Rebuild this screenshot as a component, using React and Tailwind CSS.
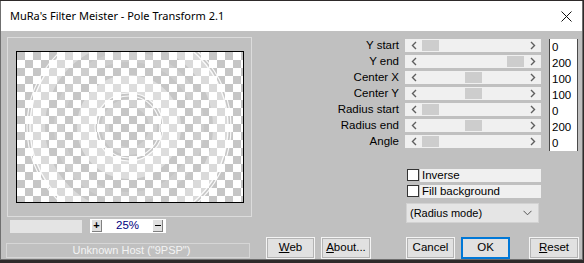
import React from "react";

const sliders = [
  { label: "Y start", value: "0", pos: 0 },
  { label: "Y end", value: "200", pos: 1 },
  { label: "Center X", value: "100", pos: 0.5 },
  { label: "Center Y", value: "100", pos: 0.5 },
  { label: "Radius start", value: "0", pos: 0 },
  { label: "Radius end", value: "200", pos: 0.5 },
  { label: "Angle", value: "0", pos: 0 },
];

function Chevron({ dir }) {
  return (
    <svg width="6" height="9" viewBox="0 0 6 9">
      <polyline
        points={dir === "left" ? "5,1 1.5,4.5 5,8" : "1,1 4.5,4.5 1,8"}
        fill="none"
        stroke="#5f5f5f"
        strokeWidth="1.4"
      />
    </svg>
  );
}

function Slider({ pos }) {
  return (
    <div className="ml-[6px] w-[136px] h-[13px] bg-[#f0f0f0] flex items-center">
      <div className="w-[17px] h-full flex items-center justify-center">
        <Chevron dir="left" />
      </div>
      <div className="flex-1 h-full relative">
        {/* thumb travels 0..85px */}
        <div
          className="absolute top-[1px] bottom-[1px] w-[17px] bg-[#cdcdcd]"
          style={{ left: pos * 85 }}
        />
      </div>
      <div className="w-[17px] h-full flex items-center justify-center">
        <Chevron dir="right" />
      </div>
    </div>
  );
}

function Preview() {
  return (
    <svg width="226" height="150" viewBox="0 0 226 150" className="block">
      <defs>
        <pattern id="chk" width="16" height="16" patternUnits="userSpaceOnUse">
          <rect width="16" height="16" fill="#ffffff" />
          <rect width="8" height="8" fill="#c6c6c6" />
          <rect x="8" y="8" width="8" height="8" fill="#c6c6c6" />
        </pattern>
      </defs>
      <rect width="226" height="150" fill="url(#chk)" />
      <g fill="none" stroke="#ffffff">
        <circle cx="112" cy="75" r="24" strokeWidth="8" opacity="0.2" />
        <circle cx="112" cy="75" r="43" strokeWidth="18" opacity="0.4" />
        <circle cx="112" cy="75" r="70" strokeWidth="10" opacity="0.15" />
        <circle cx="112" cy="75" r="92" strokeWidth="16" opacity="0.35" />
        <circle cx="112" cy="75" r="31" strokeWidth="1.2" opacity="0.9" />
        <circle cx="112" cy="75" r="34" strokeWidth="1.2" opacity="0.9" />
        <circle cx="112" cy="75" r="99" strokeWidth="1.2" opacity="0.9" />
        <circle cx="112" cy="75" r="102" strokeWidth="1.2" opacity="0.9" />
      </g>
    </svg>
  );
}

function Btn({ children, className = "", ok = false }) {
  return (
    <button
      className={`h-[22px] bg-[#e1e1e1] text-[11.5px] text-black flex items-center justify-center ${
        ok
          ? "border-2 border-[#0078d7]"
          : "border border-[#f4f4f4] shadow-[inset_0_0_0_1px_#b4b4b4]"
      } ${className}`}
    >
      {children}
    </button>
  );
}

export default function App() {
  return (
    <div className="w-[584px] h-[263px] bg-[#2e2a2a] pt-px font-['Liberation_Sans',Arial,sans-serif] overflow-hidden">
      <div className="w-[583px] h-[259px] flex flex-col border-x border-b border-[#6f6f6f]">
        {/* title bar */}
        <div className="h-[30px] bg-white flex items-center pl-[9px] pr-[10px]">
          <span className="text-[11px] text-black font-['Noto_Sans',sans-serif]">
            MuRa's Filter Meister - Pole Transform 2.1
          </span>
          <svg width="11" height="11" viewBox="0 0 11 11" className="ml-auto">
            <path d="M0.5 0.5 L10.5 10.5 M10.5 0.5 L0.5 10.5" stroke="#111" strokeWidth="1" />
          </svg>
        </div>

        {/* body */}
        <div className="flex-1 bg-[#c0c0c0] flex pl-[6px] text-[11px] text-black">
          {/* left column */}
          <div className="w-[245px] flex flex-col pt-[6px]">
            <div className="h-[180px] border border-[#dcdcdc] pt-[13px] pl-[8px]">
              <div className="w-[228px] h-[152px] border border-black">
                <Preview />
              </div>
            </div>
            <div className="mt-[2px] pl-[3px] flex items-center h-[14px]">
              <div className="w-[72px] h-[13px] bg-[#e4e4e4]" />
              <div className="ml-[8px] w-[76px] h-[14px] bg-white flex items-center pl-[2px] pr-[3px]">
                <div className="w-[10px] h-[12px] bg-[#e0e0e0] border-r border-b border-[#808080] flex items-center justify-center text-[11px] leading-none font-bold">
                  +
                </div>
                <span className="flex-1 text-center text-[#000080] leading-none text-[11.5px]">25%</span>
                <div className="w-[10px] h-[12px] bg-[#e0e0e0] border-r border-b border-[#808080] flex items-center justify-center">
                  <div className="w-[6px] h-px bg-black" />
                </div>
              </div>
            </div>
            <div className="mt-[10px] -ml-[1px] w-[244px] h-[15px] border border-[#d6d6d6] flex items-center justify-center pl-[7px] text-[#f4f4f4] leading-none">
              Unknown Host ("9PSP")
            </div>
          </div>

          {/* right region */}
          <div className="ml-[14px] w-[313px] flex flex-col pt-[8px]">
            {sliders.map((s) => (
              <div key={s.label} className="h-[16px] flex items-start">
                <div className="w-[133px] h-[13px] text-right leading-[13px] text-[11.5px]">
                  {s.label}
                </div>
                <Slider pos={s.pos} />
                <div className="ml-[8px] w-[29px] h-[16px] bg-white border-x border-[#4a4a4a] pl-[2px] leading-[16px] text-[11.5px]">
                  {s.value}
                </div>
              </div>
            ))}

            <div className="mt-[18px] ml-[141px] h-[13px] flex">
              <div className="w-[12px] h-[12px] bg-white border border-[#333]" />
              <div className="ml-px w-[121px] h-[13px] bg-[#f0f0f0] pl-[2px] leading-[13px] text-[11.5px]">Inverse</div>
            </div>
            <div className="mt-[3px] ml-[141px] h-[13px] flex">
              <div className="w-[12px] h-[12px] bg-white border border-[#333]" />
              <div className="ml-px w-[121px] h-[13px] bg-[#f0f0f0] pl-[2px] leading-[13px] text-[11.5px]">
                Fill background
              </div>
            </div>

            <div className="mt-[5px] ml-[140px] w-[133px] h-[20px] bg-[#e5e5e5] border border-[#d2d2d2] flex items-center pl-[3px] pr-[6px]">
              <span>(Radius mode)</span>
              <svg width="9" height="6" viewBox="0 0 9 6" className="ml-auto">
                <polyline points="0.5,0.8 4.5,4.8 8.5,0.8" fill="none" stroke="#555" strokeWidth="1" />
              </svg>
            </div>

            <div className="mt-[14px] flex">
              <Btn className="w-[49px]">
                <span><u>W</u>eb</span>
              </Btn>
              <Btn className="ml-[6px] w-[50px]">
                <span><u>A</u>bout...</span>
              </Btn>
              <Btn className="ml-[35px] w-[49px]">Cancel</Btn>
              <Btn ok className="ml-[6px] w-[49px]">OK</Btn>
              <Btn className="ml-[19px] w-[50px]">
                <span><u>R</u>eset</span>
              </Btn>
            </div>
          </div>
        </div>
      </div>
    </div>
  );
}
